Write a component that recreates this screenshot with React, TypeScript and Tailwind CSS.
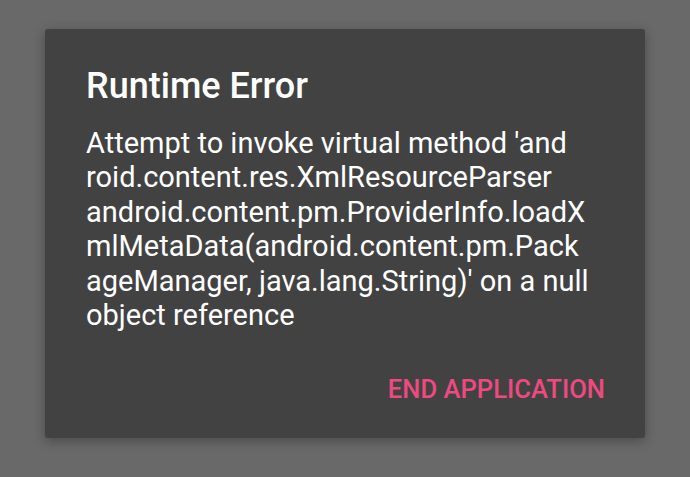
export default function App() {
  return (
    <div className="flex h-[477px] w-[690px] items-start justify-center bg-[#696969] pt-[29px] font-['Roboto',sans-serif]">
      <div className="flex h-[409px] w-[600px] flex-col rounded-[3px] bg-[#424242] pl-[41px] pr-[40px] pt-[37px] shadow-[0_3px_12px_rgba(0,0,0,0.3)]">
        <h1 className="text-[36px] font-medium leading-[40px] text-white">Runtime Error</h1>
        <p className="mt-[20px] text-[29px] leading-[34.4px] text-white">
          Attempt to invoke virtual method 'and
          <br />
          roid.content.res.XmlResourceParser
          <br />
          android.content.pm.ProviderInfo.loadX
          <br />
          mlMetaData(android.content.pm.Pack
          <br />
          ageManager, java.lang.String)' on a null
          <br />
          object reference
        </p>
        <div className="mt-auto flex justify-end pb-[34px]">
          <button className="text-[25.6px] font-medium leading-[30px] text-[#ec4a80]">
            END APPLICATION
          </button>
        </div>
      </div>
    </div>
  );
}
